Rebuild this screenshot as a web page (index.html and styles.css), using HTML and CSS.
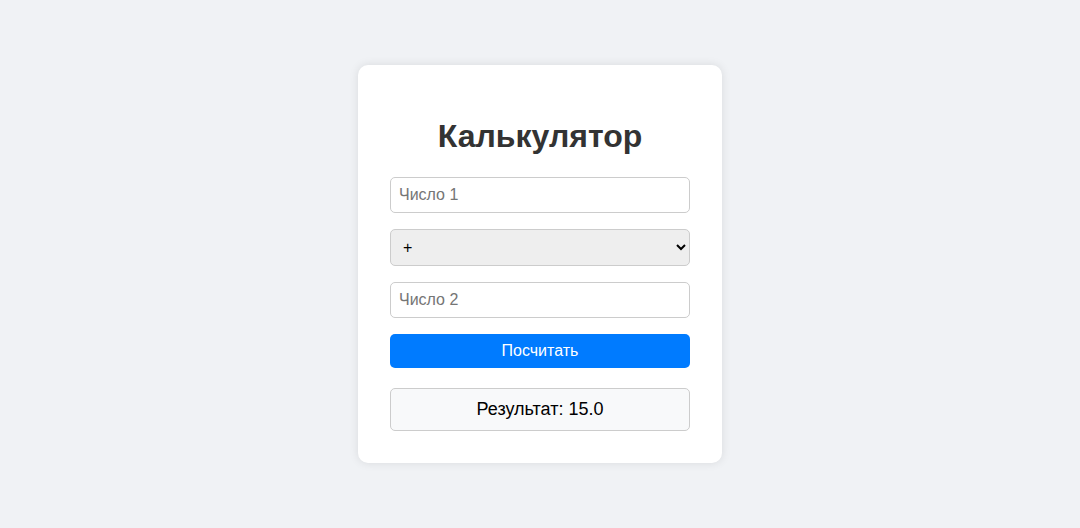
FILE: index.html
```html
<!DOCTYPE html>
<html lang="ru">
<head>
<meta charset="utf-8">
<title>Калькулятор</title>
<link rel="stylesheet" href="styles.css">
</head>
<body>
<div class="card">
  <h1 class="title">Калькулятор</h1>
  <input class="field" type="text" placeholder="Число 1">
  <select class="field select">
    <option>+</option>
    <option>-</option>
    <option>*</option>
    <option>/</option>
  </select>
  <input class="field" type="text" placeholder="Число 2">
  <button class="btn">Посчитать</button>
  <div class="result">Результат: 15.0</div>
</div>
</body>
</html>
```

FILE: styles.css
```css
html, body {
  margin: 0;
  padding: 0;
}
body {
  font-family: "Liberation Sans", Arial, sans-serif;
  background: #f0f2f5;
  height: 100vh;
  display: flex;
  align-items: center;
  justify-content: center;
}
.card {
  background: #fff;
  width: 300px;
  padding: 32px;
  border-radius: 10px;
  box-shadow: 0 0 10px rgba(0, 0, 0, 0.1);
  text-align: center;
}
.title {
  font-size: 32px;
  font-weight: bold;
  color: #333;
  margin: 21px 0 22px;
}
.field {
  display: block;
  width: 100%;
  box-sizing: border-box;
  margin: 0 0 16px;
  padding: 8px;
  font-family: "Liberation Sans", Arial, sans-serif;
  font-size: 16px;
  border: 1px solid #ccc;
  border-radius: 5px;
  height: 36px;
}
.field::placeholder {
  color: #757575;
}
.select {
  height: 37px;
  background: #eee;
  color: #000;
}
.btn {
  display: block;
  width: 100%;
  height: 34px;
  padding: 8px;
  border: none;
  border-radius: 5px;
  background: #007bff;
  color: #fff;
  font-family: "Liberation Sans", Arial, sans-serif;
  font-size: 16px;
  cursor: pointer;
}
.result {
  margin-top: 20px;
  padding: 10px;
  background: #f8f9fa;
  border: 1px solid #ccc;
  border-radius: 5px;
  font-size: 18px;
  color: #000;
  height: 21px;
  line-height: 21px;
}
```
